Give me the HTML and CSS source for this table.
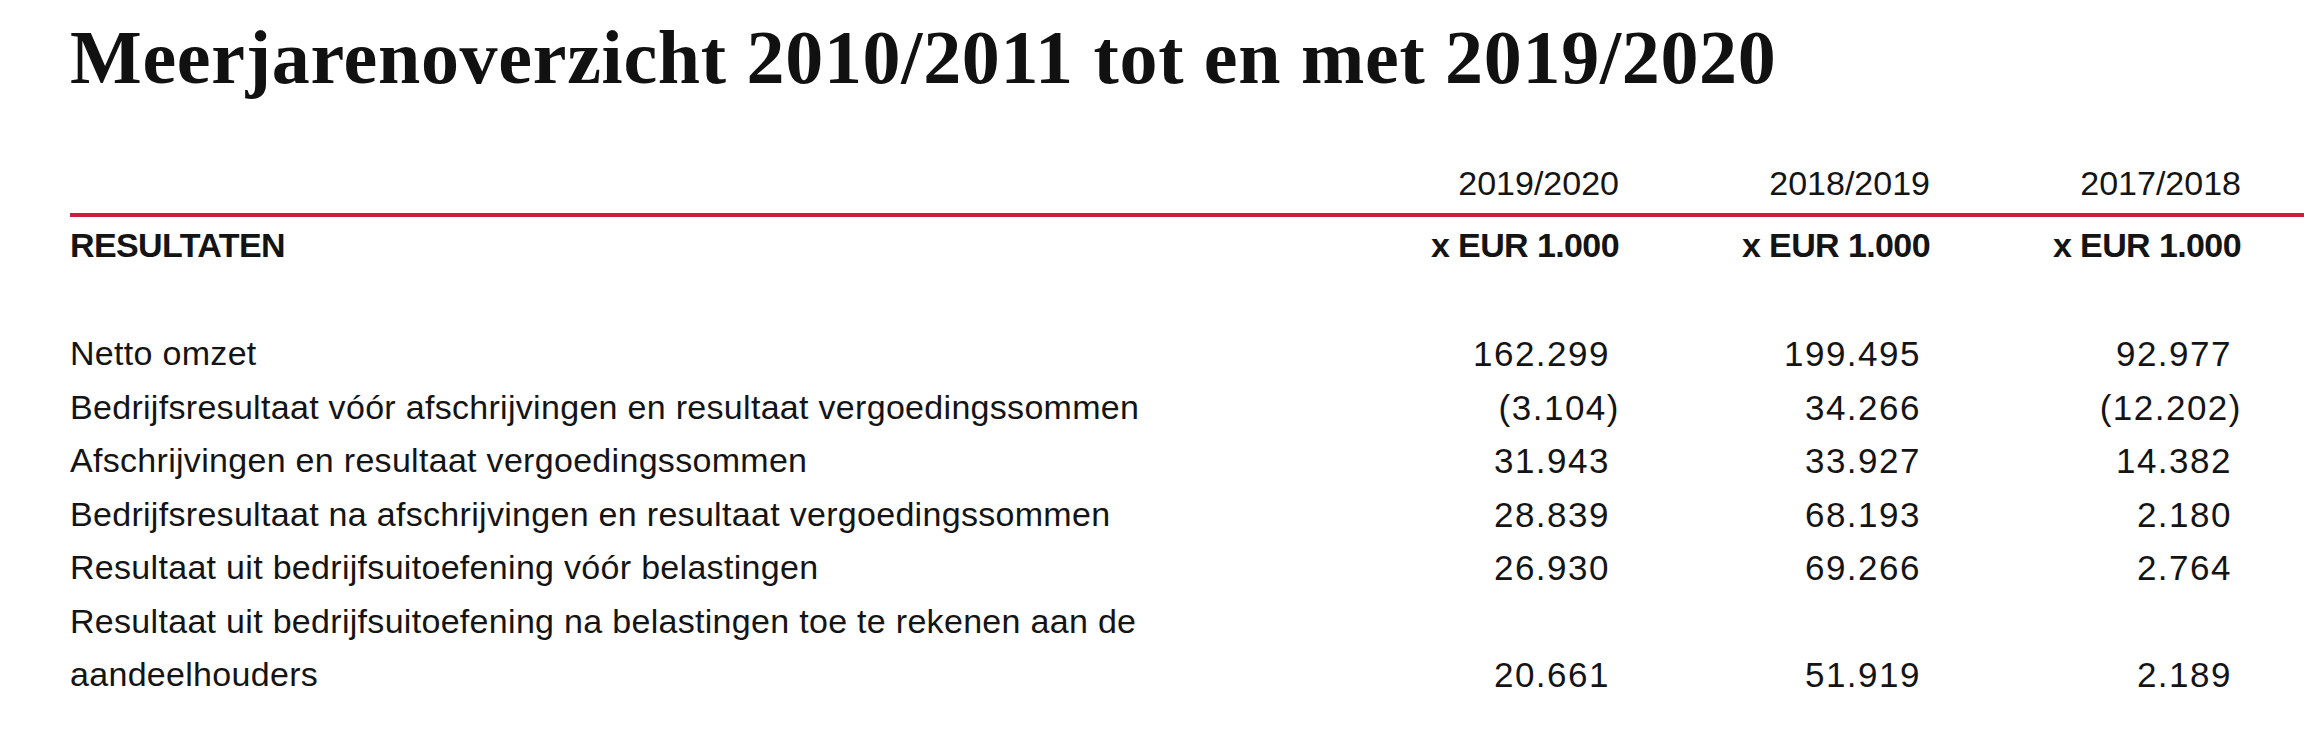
FILE: index.html
```html
<!DOCTYPE html>
<html lang="nl">
<head>
<meta charset="utf-8">
<title>Meerjarenoverzicht</title>
<link rel="stylesheet" href="styles.css">
</head>
<body>
<main class="page">
  <h1 class="title">Meerjarenoverzicht 2010/2011 tot en met 2019/2020</h1>
  <section class="table">
    <div class="row head">
      <div class="label"></div>
      <div class="col">2019/2020</div>
      <div class="col">2018/2019</div>
      <div class="col">2017/2018</div>
    </div>
    <div class="row section">
      <div class="label">RESULTATEN</div>
      <div class="col">x EUR 1.000</div>
      <div class="col">x EUR 1.000</div>
      <div class="col">x EUR 1.000</div>
    </div>
    <div class="body">
      <div class="row line">
        <div class="label">Netto omzet</div>
        <div class="num">162.299</div>
        <div class="num">199.495</div>
        <div class="num">92.977</div>
      </div>
      <div class="row line">
        <div class="label">Bedrijfsresultaat vóór afschrijvingen en resultaat vergoedingssommen</div>
        <div class="num">(3.104<span class="paren">)</span></div>
        <div class="num">34.266</div>
        <div class="num">(12.202<span class="paren">)</span></div>
      </div>
      <div class="row line">
        <div class="label">Afschrijvingen en resultaat vergoedingssommen</div>
        <div class="num">31.943</div>
        <div class="num">33.927</div>
        <div class="num">14.382</div>
      </div>
      <div class="row line">
        <div class="label">Bedrijfsresultaat na afschrijvingen en resultaat vergoedingssommen</div>
        <div class="num">28.839</div>
        <div class="num">68.193</div>
        <div class="num">2.180</div>
      </div>
      <div class="row line">
        <div class="label">Resultaat uit bedrijfsuitoefening vóór belastingen</div>
        <div class="num">26.930</div>
        <div class="num">69.266</div>
        <div class="num">2.764</div>
      </div>
      <div class="row line">
        <div class="label">Resultaat uit bedrijfsuitoefening na belastingen toe te rekenen aan de aandeelhouders</div>
        <div class="num">20.661</div>
        <div class="num">51.919</div>
        <div class="num">2.189</div>
      </div>
    </div>
  </section>
</main>
</body>
</html>
```

FILE: styles.css
```css
html, body {
  margin: 0;
  padding: 0;
  background: #ffffff;
}

.page {
  padding-left: 70px;
  color: #141414;
  font-family: "Liberation Sans", Arial, sans-serif;
}

.title {
  margin: 19px 0 0 0;
  font-family: "Liberation Serif", "Times New Roman", serif;
  font-weight: 700;
  font-size: 76px;
  line-height: 76px;
  letter-spacing: 0.7px;
  color: #111111;
}

.table {
  margin-top: 68px;
}

.row {
  display: grid;
  grid-template-columns: 1fr 311px 311px 311px;
  padding-right: 63px;
  font-size: 34px;
}

.head {
  line-height: 40px;
  padding-bottom: 10px;
  border-bottom: 4px solid #c8203f;
}

.head .col {
  text-align: right;
}

.section {
  margin-top: 8px;
  line-height: 40px;
  font-weight: 700;
  letter-spacing: -0.6px;
}

.section .col {
  text-align: right;
}

.body {
  margin-top: 62px;
}

.line {
  line-height: 53.5px;
}

.line .label {
  letter-spacing: 0.3px;
}

.num {
  align-self: end;
  text-align: right;
  padding-right: 9px;
  font-size: 35px;
  letter-spacing: 1.5px;
}

.paren {
  margin-right: -10px;
}
```
